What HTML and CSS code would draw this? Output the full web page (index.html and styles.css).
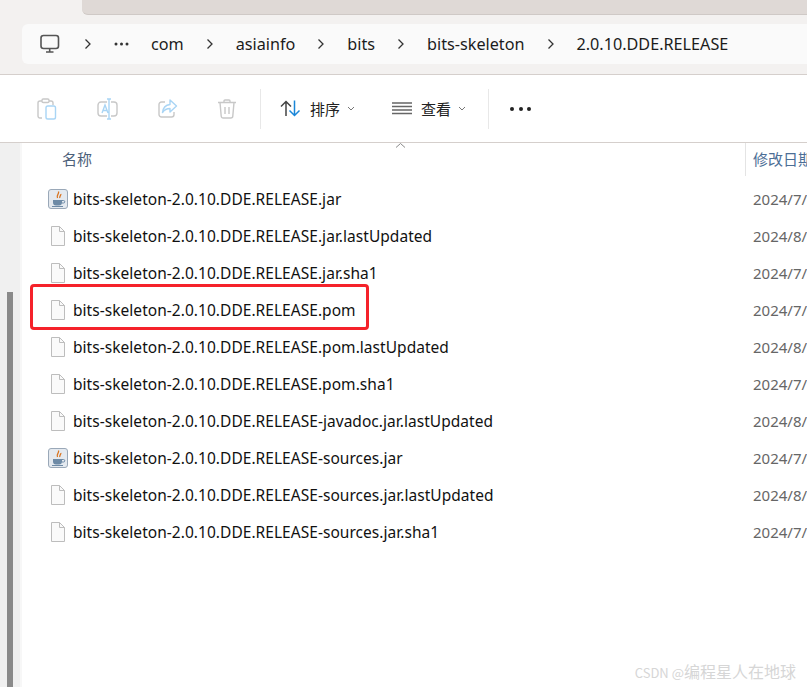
FILE: index.html
```html
<!DOCTYPE html>
<html lang="zh">
<head>
<meta charset="utf-8">
<title>2.0.10.DDE.RELEASE</title>
<link rel="stylesheet" href="styles.css">
</head>
<body>
<div class="top">
  <div class="tabstrip"><div class="tab-left"></div><div class="tab-rest"></div></div>
  <div class="address">
    <svg class="pc" width="20" height="20" viewBox="0 0 20 20" fill="none" stroke="#555" stroke-width="1.6"><rect x="1" y="1.5" width="17.5" height="13" rx="2.5"/><path d="M6 18h7.5M9.7 15v3"/></svg>
    <svg class="chev first" width="8" height="12" viewBox="0 0 8 12" fill="none" stroke="#333" stroke-width="1.3"><path d="M1.5 1.5 6 6l-4.500 4.500"/></svg>
    <svg class="ell" width="15" height="4" viewBox="0 0 15 4" fill="#333"><circle cx="2" cy="2" r="1.500"/><circle cx="7.500" cy="2" r="1.500"/><circle cx="13" cy="2" r="1.500"/></svg>
    <span class="crumb">com</span>
    <svg class="chev" width="8" height="12" viewBox="0 0 8 12" fill="none" stroke="#333" stroke-width="1.3"><path d="M1.5 1.500 6 6l-4.500 4.500"/></svg>
    <span class="crumb">asiainfo</span>
    <svg class="chev" width="8" height="12" viewBox="0 0 8 12" fill="none" stroke="#333" stroke-width="1.3"><path d="M1.500 1.500 6 6l-4.500 4.500"/></svg>
    <span class="crumb">bits</span>
    <svg class="chev" width="8" height="12" viewBox="0 0 8 12" fill="none" stroke="#333" stroke-width="1.3"><path d="M1.500 1.500 6 6l-4.500 4.500"/></svg>
    <span class="crumb">bits-skeleton</span>
    <svg class="chev" width="8" height="12" viewBox="0 0 8 12" fill="none" stroke="#333" stroke-width="1.3"><path d="M1.500 1.500 6 6l-4.500 4.500"/></svg>
    <span class="crumb">2.0.10.DDE.RELEASE</span>
  </div>
</div>
<div class="toolbar">
  <div class="tools">
    <svg width="20" height="22" viewBox="0 0 20 22" fill="none" stroke-width="1.400"><path d="M12 3h2a2 2 0 0 1 2 2v2M5 20H3a2 2 0 0 1-2-2V5a2 2 0 0 1 2-2h2" stroke="#c8c8c8"/><rect x="5" y="1" width="7" height="3.500" rx="1.200" stroke="#c8c8c8"/><rect x="9" y="8" width="9.500" height="13" rx="1.800" stroke="#a9d5f5"/></svg>
    <svg width="21" height="22" viewBox="0 0 21 22" fill="none" stroke-width="1.400"><path d="M10 4H4a3 3 0 0 0-3 3v8a3 3 0 0 0 3 3h6M14 4h3a3 3 0 0 1 3 3v8a3 3 0 0 1-3 3h-3" stroke="#c8c8c8"/><path d="M5 15l3-8 3 8M6 12.500h4M10 1h4M12 1v20M10 21h4" stroke="#a9d5f5"/></svg>
    <svg width="20" height="20" viewBox="0 0 20 20" fill="none" stroke-width="1.400"><path d="M7 3H3.500A2.500 2.500 0 0 0 1 5.500v10A2.500 2.500 0 0 0 3.500 18h10a2.500 2.500 0 0 0 2.500-2.500V13" stroke="#c8c8c8"/><path d="M12 1l6.500 6-6.500 6V9.500c-3.500 0-5.500 1-7.500 4 .5-4.500 3-7.500 7.500-8z" stroke="#a9d5f5" stroke-linejoin="round"/></svg>
    <svg width="18" height="20" viewBox="0 0 18 20" fill="none" stroke="#c8c8c8" stroke-width="1.400"><path d="M0 3.500h18M6 3.500V2a1 1 0 0 1 1-1h4a1 1 0 0 1 1 1v1.500M2 3.500l1.200 13.500a2 2 0 0 0 2 2h7.600a2 2 0 0 0 2-2L16 3.500M7 8v7M11 8v7"/></svg>
  </div>
  <div class="sep"></div>
  <div class="tbtn sort">
    <svg width="21" height="17" viewBox="0 0 21 17" fill="none" stroke-width="1.500"><path d="M6 16V1.500M1 6.500l5-5 5 5" stroke="#444"/><path d="M14.500 0.500V15.500M9.500 10.500l5 5 5-5" stroke="#1a86d8"/></svg>
    <span class="cjk label">排序</span>
    <svg class="down" width="8" height="5" viewBox="0 0 8 5" fill="none" stroke="#777" stroke-width="1"><path d="M1 1l3 3 3-3"/></svg>
  </div>
  <div class="tbtn view">
    <svg width="20" height="13" viewBox="0 0 20 13" fill="none" stroke="#666" stroke-width="1.300"><path d="M0 1h20M0 4.500h20M0 8h20M0 11.500h20"/></svg>
    <span class="cjk label">查看</span>
    <svg class="down" width="8" height="5" viewBox="0 0 8 5" fill="none" stroke="#777" stroke-width="1"><path d="M1 1l3 3 3-3"/></svg>
  </div>
  <div class="sep"></div>
  <div class="more"><i></i><i></i><i></i></div>
</div>
<div class="body">
  <div class="side"><div class="thumb"></div></div>
  <div class="main">
    <div class="head">
      <span class="cjk h-name">名称</span>
      <svg class="sort-up" width="11" height="5" viewBox="0 0 11 5" fill="none" stroke="#8a8a8a"><path d="M1 4.500l4.500-4 4.500 4"/></svg>
      <span class="cjk h-date">修改日期</span>
    </div>
    <div class="list">
      <div class="row"><svg class="ic" width="20" height="20" viewBox="0 0 20 20"><rect x=".5" y=".5" width="19" height="19" rx="2.500" fill="#e4e9ef" stroke="#9aa8b8"/><path d="M10.500 2.500c1 2.500-2.500 3.500-1 6.500M12.800 5c.5 1.500-1.500 2-1 4" stroke="#d9731f" fill="none" stroke-width="1.300"/><path d="M5 11h9v2.500a3 3 0 0 1-3 3H8a3 3 0 0 1-3-3z" fill="#6d8aa6"/><path d="M14 11.500h1.500a1 1 0 0 1 0 2.500H14" stroke="#6d8aa6" fill="none"/><path d="M4 17.500h11" stroke="#6d8aa6"/></svg><span class="fname">bits-skeleton-2.0.10.DDE.RELEASE.jar</span><span class="date">2024/7/</span></div>
      <div class="row"><svg class="ic" width="20" height="20" viewBox="0 0 20 20"><path d="M3.500.500h8l5 5v14h-13z" fill="#fafafa" stroke="#bdbdbd"/><path d="M11.500.500v5h5" fill="none" stroke="#bdbdbd"/></svg><span class="fname">bits-skeleton-2.0.10.DDE.RELEASE.jar.lastUpdated</span><span class="date">2024/8/</span></div>
      <div class="row"><svg class="ic" width="20" height="20" viewBox="0 0 20 20"><path d="M3.500.500h8l5 5v14h-13z" fill="#fafafa" stroke="#bdbdbd"/><path d="M11.500.500v5h5" fill="none" stroke="#bdbdbd"/></svg><span class="fname">bits-skeleton-2.0.10.DDE.RELEASE.jar.sha1</span><span class="date">2024/7/</span></div>
      <div class="row"><svg class="ic" width="20" height="20" viewBox="0 0 20 20"><path d="M3.500.500h8l5 5v14h-13z" fill="#fafafa" stroke="#bdbdbd"/><path d="M11.500.500v5h5" fill="none" stroke="#bdbdbd"/></svg><span class="fname">bits-skeleton-2.0.10.DDE.RELEASE.pom</span><span class="date">2024/7/</span><div class="mark"></div></div>
      <div class="row"><svg class="ic" width="20" height="20" viewBox="0 0 20 20"><path d="M3.500.500h8l5 5v14h-13z" fill="#fafafa" stroke="#bdbdbd"/><path d="M11.500.500v5h5" fill="none" stroke="#bdbdbd"/></svg><span class="fname">bits-skeleton-2.0.10.DDE.RELEASE.pom.lastUpdated</span><span class="date">2024/8/</span></div>
      <div class="row"><svg class="ic" width="20" height="20" viewBox="0 0 20 20"><path d="M3.500.500h8l5 5v14h-13z" fill="#fafafa" stroke="#bdbdbd"/><path d="M11.500.500v5h5" fill="none" stroke="#bdbdbd"/></svg><span class="fname">bits-skeleton-2.0.10.DDE.RELEASE.pom.sha1</span><span class="date">2024/7/</span></div>
      <div class="row"><svg class="ic" width="20" height="20" viewBox="0 0 20 20"><path d="M3.500.500h8l5 5v14h-13z" fill="#fafafa" stroke="#bdbdbd"/><path d="M11.500.500v5h5" fill="none" stroke="#bdbdbd"/></svg><span class="fname">bits-skeleton-2.0.10.DDE.RELEASE-javadoc.jar.lastUpdated</span><span class="date">2024/8/</span></div>
      <div class="row"><svg class="ic" width="20" height="20" viewBox="0 0 20 20"><rect x=".5" y=".5" width="19" height="19" rx="2.500" fill="#e4e9ef" stroke="#9aa8b8"/><path d="M10.500 2.500c1 2.500-2.500 3.500-1 6.500M12.800 5c.5 1.500-1.500 2-1 4" stroke="#d9731f" fill="none" stroke-width="1.300"/><path d="M5 11h9v2.500a3 3 0 0 1-3 3H8a3 3 0 0 1-3-3z" fill="#6d8aa6"/><path d="M14 11.500h1.500a1 1 0 0 1 0 2.500H14" stroke="#6d8aa6" fill="none"/><path d="M4 17.500h11" stroke="#6d8aa6"/></svg><span class="fname">bits-skeleton-2.0.10.DDE.RELEASE-sources.jar</span><span class="date">2024/7/</span></div>
      <div class="row"><svg class="ic" width="20" height="20" viewBox="0 0 20 20"><path d="M3.500.500h8l5 5v14h-13z" fill="#fafafa" stroke="#bdbdbd"/><path d="M11.500.500v5h5" fill="none" stroke="#bdbdbd"/></svg><span class="fname">bits-skeleton-2.0.10.DDE.RELEASE-sources.jar.lastUpdated</span><span class="date">2024/8/</span></div>
      <div class="row"><svg class="ic" width="20" height="20" viewBox="0 0 20 20"><path d="M3.500.500h8l5 5v14h-13z" fill="#fafafa" stroke="#bdbdbd"/><path d="M11.500.500v5h5" fill="none" stroke="#bdbdbd"/></svg><span class="fname">bits-skeleton-2.0.10.DDE.RELEASE-sources.jar.sha1</span><span class="date">2024/7/</span></div>
    </div>
    <div class="wm"><span class="wm-src">CSDN @</span>编程星人在地球</div>
  </div>
</div>
</body>
</html>
```
FILE: styles.css
```css
* { box-sizing: border-box; }
html, body { margin: 0; height: 100%; overflow: hidden; }
body { width: 807px; height: 687px; background: #fff; font-family: "Noto Sans", "Noto Sans CJK SC", sans-serif; color: #1c1c1c; }
.cjk { font-family: "Noto Sans CJK SC", sans-serif; }
svg { display: block; flex: none; }

.top { height: 75px; background: #f3f1f0; border-bottom: 1px solid #d5cfcc; }
.tabstrip { height: 15px; display: flex; }
.tab-left { width: 82px; }
.tab-rest { flex: 1; background: #dfd9d6; border-bottom: 1px solid #cfc9c6; border-bottom-left-radius: 6px; }
.address { margin: 9px 0 0 22px; height: 40px; background: #fafafa; border-radius: 6px 0 0 6px; display: flex; align-items: center; padding-left: 18px; font-size: 16.200px; }
.chev { margin-right: 22px; }
.chev.first { margin-left: 24px; margin-right: 22px; }
.ell { margin-right: 22px; }
.crumb { margin-right: 22px; white-space: nowrap; padding-bottom: 1px; }

.toolbar { height: 68px; border-bottom: 1px solid #d5cfcc; display: flex; align-items: center; padding-left: 37px; }
.tools { display: flex; align-items: center; gap: 40px; width: 223px; }
.sep { width: 1px; height: 40px; background: #e8e8e8; }
.tbtn { display: flex; align-items: center; }
.sort { margin-left: 19px; width: 112px; }
.view { width: 96px; }
.label { font-size: 15px; margin-left: 9px; color: #222; padding-bottom: 1px; }
.down { margin-left: 7px; }
.more { display: flex; gap: 4.500px; margin-left: 21px; }
.more i { width: 4px; height: 4px; border-radius: 50%; background: #222; }

.body { height: 544px; display: flex; }
.side { width: 22px; flex: none; background: #f0f0f0; border-right: 2px solid #f7f7f7; padding: 149px 0 0 7px; }
.thumb { width: 6px; height: 395px; background: #8a8a8a; }
.main { flex: 1; min-width: 0; position: relative; overflow: hidden; }
.head { height: 33px; display: flex; position: relative; align-items: center; padding-bottom: 2px; }
.h-name { margin-left: 40px; font-size: 15px; color: #4c607a; }
.sort-up { position: absolute; left: 373px; top: 0; }
.h-date { position: absolute; left: 723px; top: 0; height: 33px; line-height: 31px; border-left: 1px solid #e4e4e4; padding-left: 7px; font-size: 15px; color: #4c6e96; white-space: nowrap; width: 62px; overflow: hidden; }
.list { padding-top: 4px; }
.row { height: 37px; display: flex; align-items: center; position: relative; padding-left: 26px; font-size: 15.500px; white-space: nowrap; }
.ic { margin-right: 5px; }
.fname { width: 680px; color: #111; letter-spacing: .04px; }
.date { position: absolute; left: 731px; color: #666; font-size: 15px; }
.mark { position: absolute; left: 8px; top: -7px; width: 339px; height: 46px; border: 3px solid #f5222a; border-radius: 4px; }
.wm { position: absolute; right: 11px; bottom: 4px; font-size: 16px; color: #d6d6d6; font-family: "Noto Sans CJK SC", sans-serif; }
.wm-src { font-size: 13px; }
```
